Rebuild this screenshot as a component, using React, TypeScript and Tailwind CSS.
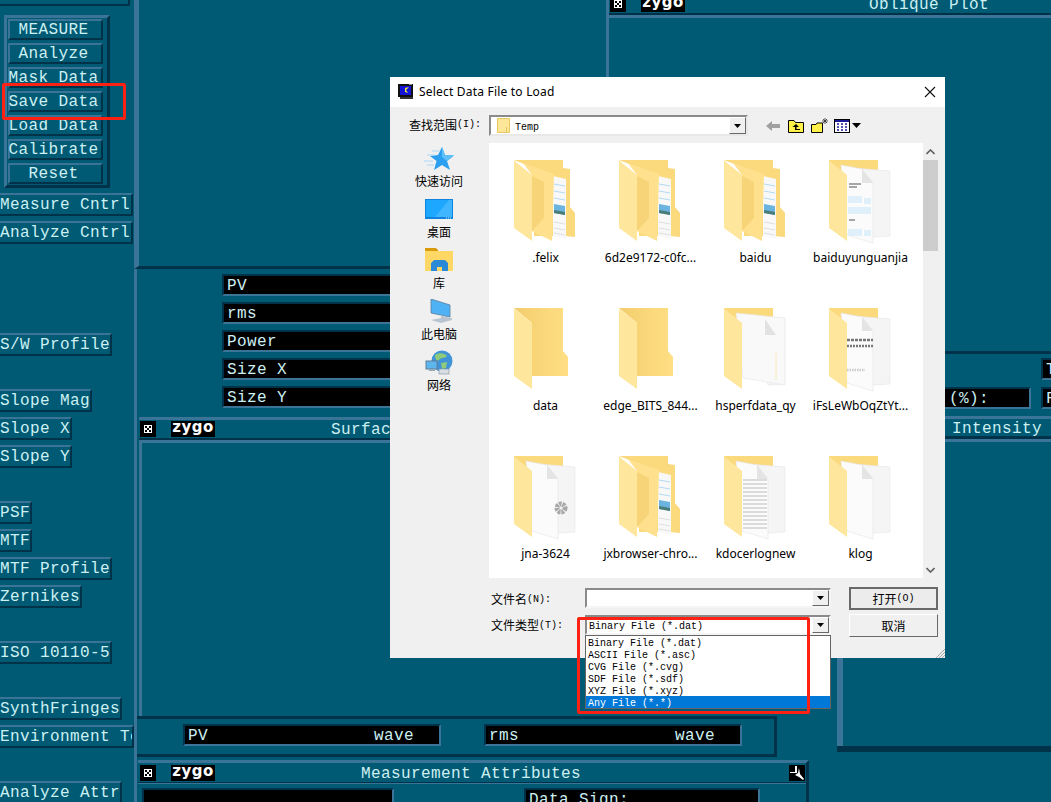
import React from "react"

const MONO = "[font-family:'Liberation_Mono',monospace]"
const UI = "[font-family:'Noto_Sans','Noto_Sans_CJK_SC',sans-serif]"
const CN = "[font-family:'Noto_Sans_CJK_SC',sans-serif]"

const raised = "border-t-[#3a7598] border-l-[#3a7598] border-b-[#003349] border-r-[#003349]"
const sunken = "border-t-[#003349] border-l-[#003349] border-b-[#3a7598] border-r-[#3a7598]"
const xText = "text-[16px] tracking-[0.4px] text-[#cdf0f2] whitespace-nowrap leading-none"

const panelButtons = ["MEASURE", "Analyze", "Mask Data", "Save Data", "Load Data", "Calibrate", "Reset"]

const sideButtons = [
  { label: "Measure Cntrl", w: "w-[133px]", mt: "mt-[5px]" },
  { label: "Analyze Cntrl", w: "w-[133px]", mt: "mt-[5px]" },
  { label: "S/W Profile", w: "w-[112px]", mt: "mt-[89px]" },
  { label: "Slope Mag", w: "w-[92px]", mt: "mt-[33px]" },
  { label: "Slope X", w: "w-[72px]", mt: "mt-[5px]" },
  { label: "Slope Y", w: "w-[72px]", mt: "mt-[5px]" },
  { label: "PSF", w: "w-[32px]", mt: "mt-[33px]" },
  { label: "MTF", w: "w-[32px]", mt: "mt-[5px]" },
  { label: "MTF Profile", w: "w-[112px]", mt: "mt-[5px]" },
  { label: "Zernikes", w: "w-[82px]", mt: "mt-[5px]" },
  { label: "ISO 10110-5", w: "w-[112px]", mt: "mt-[33px]" },
  { label: "SynthFringes", w: "w-[122px]", mt: "mt-[33px]" },
  { label: "Environment Te", w: "w-[134px]", mt: "mt-[5px]" },
  { label: "Analyze Attr", w: "w-[122px]", mt: "mt-[33px]" },
]

const files: { name: string; kind: FolderKind }[] = [
  { name: ".felix", kind: "doc" },
  { name: "6d2e9172-c0fc...", kind: "doc" },
  { name: "baidu", kind: "doc" },
  { name: "baiduyunguanjia", kind: "yun" },
  { name: "data", kind: "plain" },
  { name: "edge_BITS_844...", kind: "plain" },
  { name: "hsperfdata_qy", kind: "sheet" },
  { name: "iFsLeWbOqZtYt...", kind: "print" },
  { name: "jna-3624", kind: "gear" },
  { name: "jxbrowser-chro...", kind: "doc" },
  { name: "kdocerlognew", kind: "lines" },
  { name: "klog", kind: "blank" },
]

type FolderKind = "doc" | "plain" | "yun" | "sheet" | "print" | "gear" | "lines" | "blank"

const Folder = ({ kind }: { kind: FolderKind }) => {
  const defs = (
    <defs>
      <linearGradient id="fback" x1="0" x2="1" y1="0" y2="0">
        <stop offset="0" stopColor="#f3cd6c" />
        <stop offset="1" stopColor="#ffdf85" />
      </linearGradient>
    </defs>
  )
  const flap = <path d="M0 0.5 L18 15 V81 L0 68 Z" fill="#ffe69d" />

  if (kind === "plain") {
    return (
      <svg width="63" height="84" viewBox="0 0 63 84">
        {defs}
        <path d="M0 0 H49 V43 L54 49 V68 H18 V15 Z" fill="url(#fback)" />
        {flap}
      </svg>
    )
  }

  if (kind === "doc") {
    return (
      <svg width="63" height="84" viewBox="0 0 63 84">
        {defs}
        <path d="M0 0 H49 V8 L56 9 V47 L61 53 V77 L50 76 H20 V8 Z" fill="#fbd97d" />
        <path d="M39 16 L52 19 V79 L39 76 Z" fill="#f8f8f8" />
        <path d="M40 24 L51 26 M40 31 L51 33 M40 38 L51 40" stroke="#9fd2f0" strokeWidth="0.8" />
        <path d="M40 62 L51 64 M40 68 L51 70 M40 73 L51 75" stroke="#d8d8d8" strokeWidth="0.8" />
        <path d="M40 44 L51 46 V55 L40 53 Z" fill="#6cb4e0" />
        <path d="M40 50 L51 52 V55 L40 53 Z" fill="#4a7c78" />
        <path d="M9 3 L40 14 L38 81 L18 71 V15 Z" fill="#ffe08d" />
        <path d="M18 16 L30 22 V58 L18 71 Z" fill="#f7d477" />
        {flap}
      </svg>
    )
  }

  return (
    <svg width="63" height="84" viewBox="0 0 63 84">
      {defs}
      <path d="M0 0 H49 V12 H0 Z" fill="#fbd97d" />
      <path d="M25 8 L61 11 V76 L44 77 Z" fill="#f5f5f5" stroke="#e6e6e6" strokeWidth="0.6" />
      {kind === "sheet" && <path d="M12 5 L61 10 V77 L19 70 Z" fill="#f9f9f9" stroke="#e6e6e6" strokeWidth="0.6" />}
      {kind !== "sheet" && <path d="M12 5 L33 9 L44 23 V83 L18 75 Z" fill="#fbfbfb" stroke="#e4e4e4" strokeWidth="0.6" />}
      {kind === "sheet" && <path d="M41 11 L52 27 H41 Z" fill="#e2e2e2" />}
      {kind === "sheet" && <path d="M52 45 V72" stroke="#f6e4b0" strokeWidth="0.8" />}
      {kind !== "sheet" && <path d="M33 9 L44 23 H33 Z" fill="#e4e4e4" />}
      {kind === "yun" && (
        <g fill="#dff0fb">
          <rect x="19" y="36" width="14" height="7" />
          <rect x="35" y="38" width="7" height="6" />
          <rect x="19" y="47" width="23" height="7" />
          <rect x="19" y="69" width="14" height="7" />
          <rect x="35" y="70" width="7" height="6" />
        </g>
      )}
      {kind === "yun" && <path d="M20 24 H32 M20 27 H28 M20 60 H26" stroke="#8a8a8a" strokeWidth="1.5" />}
      {kind === "print" && (
        <g stroke="#777" strokeWidth="2.5">
          <path d="M18 32 H44" strokeDasharray="3 1" />
          <path d="M18 38 H44" strokeDasharray="2 1" />
          <path d="M18 62 H36" stroke="#ccc" strokeDasharray="1.5 1" />
        </g>
      )}
      {kind === "gear" && <circle cx="47" cy="52" r="4" fill="none" stroke="#a8a8a8" strokeWidth="5" strokeDasharray="2.5 0.8" />}
      {kind === "lines" && (
        <path
          d="M19 24 H43 M19 28 H43 M19 32 H43 M19 36 H43 M19 40 H43 M19 44 H43 M19 48 H43 M19 52 H43 M19 56 H43 M19 60 H43 M19 64 H43 M19 68 H43 M19 72 H43"
          stroke="#bbb"
          strokeWidth="1"
        />
      )}
      {flap}
    </svg>
  )
}

const ZygoBox = () => (
  <svg width="16" height="16" viewBox="0 0 16 16" className="shrink-0">
    <rect width="16" height="16" fill="#000" />
    <rect x="4" y="4" width="8" height="8" fill="#fff" />
    <rect x="5" y="5" width="2" height="2" fill="#000" />
    <rect x="9" y="5" width="2" height="2" fill="#000" />
    <rect x="7" y="7" width="2" height="2" fill="#000" />
    <rect x="5" y="9" width="2" height="2" fill="#000" />
    <rect x="9" y="9" width="2" height="2" fill="#000" />
  </svg>
)

const ZygoLogo = () => (
  <span className="ml-[15px] flex h-[16px] w-[44px] shrink-0 items-start justify-center overflow-hidden bg-black text-[15px] font-bold leading-[13px] tracking-[0.5px] text-white [font-family:'DejaVu_Sans',sans-serif]">
    zygo
  </span>
)

const PointerBox = () => (
  <svg width="16" height="16" viewBox="0 0 16 16" className="shrink-0">
    <rect width="16" height="16" fill="#000" />
    <path d="M1 7 H6 V1 H8 V8 H1 Z" fill="#fff" />
    <path d="M6 10 L9 8 L10 3 L11 9 L15 14 L14 15 L10 12 Z" fill="#fff" />
  </svg>
)

const WinHeader = ({ title, titleMl }: { title: string; titleMl: string }) => (
  <div className="shrink-0">
    <div className={`flex h-[18px] items-center pl-[1px] ${MONO}`}>
      <ZygoBox />
      <ZygoLogo />
      <span className={`${titleMl} pt-[2px] ${xText}`}>{title}</span>
    </div>
    <div className="h-[2px] bg-[#003349]" />
    <div className="h-[3px] bg-[#3a7598]" />
  </div>
)

const Field = ({ text, w }: { text: string; w: string }) => (
  <div className={`flex h-[22px] shrink-0 items-center border-2 bg-black pl-[3px] pt-[2px] ${sunken} ${w} ${xText}`}>{text}</div>
)

const WaveField = ({ text }: { text: string }) => (
  <div className={`flex h-[22px] w-[258px] items-center justify-between border-2 bg-black pl-[3px] pr-[25px] pt-[2px] ${sunken} ${xText}`}>
    <span>{text}</span>
    <span>wave</span>
  </div>
)

const Sidebar = () => (
  <div className={`flex w-[134px] flex-col ${MONO}`}>
    <div className="h-[6px] w-[130px] border-b-2 border-r-2 border-[#003349]" />
    <div className={`ml-[4px] mt-[9px] flex w-[106px] flex-col gap-[3px] border-[3px] py-[1px] pl-[1px] pr-[4px] ${raised}`}>
      {panelButtons.map((b) => (
        <div key={b} className={`flex h-[21px] items-center justify-center border-2 pr-[4px] ${raised} ${xText}`}>
          {b}
        </div>
      ))}
    </div>
    {sideButtons.map((b) => (
      <div
        key={b.label}
        className={`flex h-[23px] shrink-0 items-center overflow-hidden border-2 border-l-0 ${raised} ${b.w} ${b.mt} ${xText}`}
      >
        {b.label}
      </div>
    ))}
  </div>
)

const Underlay = () => (
  <>
    {/* top centre window */}
    <div className="absolute left-[134px] top-0 h-[269px] w-[472px] border-b-[3px] border-l-[5px] border-b-[#003349] border-l-[#3a7598]" />

    {/* oblique plot window */}
    <div className="absolute left-[606px] top-[-5px] flex h-[359px] w-[445px] flex-col border-b-[3px] border-l-[3px] border-b-[#003349] border-l-[#3a7598]">
      <WinHeader title="Oblique Plot" titleMl="ml-[184px]" />
    </div>

    {/* results panel */}
    <div className={`absolute left-[134px] top-[269px] flex h-[148px] w-[280px] flex-col gap-[6px] border-l-[3px] border-l-[#3a7598] pl-[85px] pt-[5px] ${MONO}`}>
      {["PV", "rms", "Power", "Size X", "Size Y"].map((t) => (
        <Field key={t} text={t} w="w-[190px]" />
      ))}
    </div>

    {/* strip between the button column and the lower windows */}
    <div className="absolute bottom-0 left-[134px] top-[417px] w-[3px] bg-[#3a7598]" />

    {/* right side readouts */}
    <div className={`absolute left-[930px] top-[387px] ${MONO}`}>
      <div className={`flex h-[22px] w-[101px] items-center border-2 bg-black pl-[17px] pt-[2px] ${sunken} ${xText}`}>(%):</div>
    </div>
    <div className={`absolute left-[1041px] top-[358px] flex w-[30px] flex-col gap-[7px] ${MONO}`}>
      <Field text="T" w="w-[30px]" />
      <Field text="F" w="w-[30px]" />
    </div>

    {/* surface window */}
    <div className="absolute left-[139px] top-[417px] flex h-[300px] w-[637px] flex-col border-t-[3px] border-t-[#3a7598]">
      <WinHeader title="Surface" titleMl="ml-[116px]" />
      <div className="flex-1 border-l-[3px] border-l-[#3a7598]" />
    </div>

    {/* intensity window */}
    <div className={`absolute left-[837px] top-[416px] flex h-[336px] w-[214px] flex-col border-b-[6px] border-b-[#003349] ${MONO}`}>
      <div className="h-[3px] bg-[#3a7598]" />
      <div className="flex h-[17px] items-center justify-end pr-[9px] pt-[2px]">
        <span className={xText}>Intensity</span>
      </div>
      <div className="h-[3px] bg-[#003349]" />
      <div className="h-[3px] bg-[#3a7598]" />
      <div className="flex-1 border-l-[6px] border-l-[#3a7598]" />
    </div>

    {/* wave readouts */}
    <div className={`absolute left-[137px] top-[716px] flex h-[41px] w-[640px] gap-[43px] border-y-[3px] border-r-[3px] border-[#003349] pl-[46px] pt-[5px] ${MONO}`}>
      <WaveField text="PV" />
      <WaveField text="rms" />
    </div>

    {/* measurement attributes */}
    <div className={`absolute left-[138px] top-[760px] flex h-[60px] w-[671px] flex-col border-r-[3px] border-t-[3px] border-r-[#003349] border-t-[#3a7598] ${MONO}`}>
      <div className="flex h-[19px] items-center pl-[2px] pr-[1px]">
        <ZygoBox />
        <ZygoLogo />
        <span className={`ml-[146px] pt-[2px] ${xText}`}>Measurement Attributes</span>
        <span className="ml-auto">
          <PointerBox />
        </span>
      </div>
      <div className="h-[1px] bg-[#003349]" />
      <div className="h-[1px] bg-[#3a7598]" />
      <div className="flex gap-[130px] pl-[4px] pt-[4px]">
        <div className={`h-[30px] w-[252px] border-2 bg-black ${sunken}`} />
        <div className={`h-[30px] w-[236px] border-2 bg-black pl-[3px] pt-[2px] ${sunken} ${xText}`}>Data Sign:</div>
      </div>
    </div>
  </>
)

const TitleIcon = () => (
  <svg width="16" height="16" viewBox="0 0 16 16">
    <rect x="0" y="0" width="15" height="13" fill="#111" />
    <rect x="2" y="2" width="11" height="9" fill="#1414d8" />
    <path d="M7 4 L11 3 L8 6 L10 9 L7 8 Z" fill="#e8e838" />
    <rect x="2" y="13" width="13" height="2" fill="#333" />
    <rect x="11" y="0" width="3" height="1" fill="#999" />
  </svg>
)

const Tri = () => (
  <svg width="7" height="4" viewBox="0 0 7 4">
    <path d="M0 0 H7 L3.5 4 Z" fill="#000" />
  </svg>
)

const DropBtn = () => (
  <div className="flex h-full w-[17px] shrink-0 items-center justify-center border border-b-[#696969] border-l-white border-r-[#696969] border-t-white bg-[#f0f0f0]">
    <Tri />
  </div>
)

const Combo = ({ children, w }: { children?: React.ReactNode; w: string }) => (
  <div className={`flex shrink-0 border-2 border-b-[#f5f5f5] border-l-[#8a8a8a] border-r-[#f5f5f5] border-t-[#8a8a8a] bg-white ${w} h-[20px]`}>
    <div className="flex flex-1 items-center overflow-hidden pl-[1px]">{children}</div>
    <DropBtn />
  </div>
)

const Latin = ({ children }: { children: React.ReactNode }) => <span className={`text-[10px] ${MONO}`}>{children}</span>

const ToolIcons = () => (
  <div className="ml-[18px] flex items-center">
    <svg width="14" height="10" viewBox="0 0 14 10">
      <path d="M0 5 L6 0 V3 H14 V7 H6 V10 Z" fill="#a0a0a0" />
    </svg>
    <svg width="16" height="14" viewBox="0 0 16 14" className="ml-[8px]">
      <path d="M0.5 13.5 V1.5 H6 L7.5 3.5 H15.5 V13.5 Z" fill="#fff04a" stroke="#000" />
      <path d="M8 5 L4.5 8 H7 V11 H12 V10 H8.5 V8 H11 Z" fill="#000" />
    </svg>
    <svg width="17" height="15" viewBox="0 0 17 15" className="ml-[7px]">
      <path d="M0.5 14.5 V6.5 H5 L6 5 H11.5 V14.5 Z" fill="#fff04a" stroke="#000" />
      <path d="M14 0 V6 M11 3 H17 M12 1 L16 5 M16 1 L12 5" stroke="#333" strokeWidth="0.8" />
    </svg>
    <svg width="28" height="14" viewBox="0 0 28 14" className="ml-[6px]">
      <rect x="0.5" y="0.5" width="15" height="13" fill="#fff" stroke="#000" />
      <rect x="1" y="1" width="14" height="2" fill="#1a1a9a" />
      <path d="M3 5 H5 M7 5 H9 M11 5 H13 M3 8 H5 M7 8 H9 M11 8 H13 M3 11 H5 M7 11 H9 M11 11 H13" stroke="#1a1a9a" strokeWidth="1.4" />
      <path d="M18 4 H27 L22.5 9 Z" fill="#000" />
    </svg>
  </div>
)

const navItems = [
  {
    label: "快速访问",
    icon: (
      <svg width="30" height="24" viewBox="0 0 30 24">
        <path d="M18 0 L21 8 L30 8.5 L23 14 L26 23 L18 18 L10 23 L12.5 14 L6 9 L14 8 Z" fill="#2ba0f0" />
        <path d="M18 0 L21 8 L30 8.5 L23 14 L18 10 Z" fill="#5ec0f8" />
        <path d="M8 4 H15 M3 8 H11 M0 14 H9 M3 18 H10" stroke="#a8d8f8" strokeWidth="1" />
      </svg>
    ),
    pad: "pt-[1px]",
  },
  {
    label: "桌面",
    icon: (
      <svg width="28" height="20" viewBox="0 0 28 20">
        <rect width="28" height="20" fill="#0e84e0" />
        <rect x="1" y="1" width="26" height="17" fill="#1ea7ff" />
        <path d="M10 18 L24 1 H27 V18 Z" fill="#3fb6ff" />
        <path d="M21 19 H27" stroke="#d0ecff" strokeWidth="1" strokeDasharray="1 1" />
      </svg>
    ),
    pad: "pt-[2px]",
  },
  {
    label: "库",
    icon: (
      <svg width="28" height="24" viewBox="0 0 28 24">
        <path d="M0 0 H11 L13 2 V5 H0 Z" fill="#d99a0c" />
        <path d="M0 3 H28 V23 H0 Z" fill="#ffd765" />
        <path d="M6 23 V15 L9 12 H20 L23 15 V23 H17 V19 H12 V23 Z" fill="#2b8ad8" />
      </svg>
    ),
    pad: "",
  },
  {
    label: "此电脑",
    icon: (
      <svg width="24" height="25" viewBox="0 0 24 25">
        <path d="M2 0 L21 6 V18 L2 14 Z" fill="#4fb2f4" stroke="#5a7d9c" strokeWidth="0.8" />
        <path d="M12 16 V19 L2 21 L12 24 L23 21 V19 L16 18 Z" fill="#b8c4cf" />
      </svg>
    ),
    pad: "pl-[3px]",
  },
  {
    label: "网络",
    icon: (
      <svg width="28" height="25" viewBox="0 0 28 25">
        <circle cx="17" cy="11" r="10.5" fill="#3f93d6" />
        <path d="M10 5 C14 2 20 3 22 6 C19 9 16 7 14 10 C12 12 10 9 10 5 Z M16 13 L22 12 L21 18 L17 19 Z" fill="#8ecb7a" />
        <rect x="1" y="11" width="11" height="8" fill="#5db6ee" stroke="#5f7c96" />
        <rect x="4" y="19" width="6" height="2" fill="#9aa8b6" />
        <rect x="14" y="19" width="10" height="5" fill="#d8dee4" stroke="#7f8f9e" strokeWidth="0.6" />
      </svg>
    ),
    pad: "",
  },
]

const Dialog = () => (
  <div className={`absolute left-[390px] top-[77px] flex h-[581px] w-[555px] flex-col bg-[#f0f0f0] text-black ${CN}`}>
    <div className="flex h-[30px] shrink-0 items-center bg-white pl-[8px] pr-[9px]">
      <TitleIcon />
      <span className={`ml-[5px] text-[12px] tracking-[0.2px] ${UI}`}>Select Data File to Load</span>
      <svg width="12" height="12" viewBox="0 0 12 12" className="ml-auto">
        <path d="M1 1 L11 11 M11 1 L1 11" stroke="#111" strokeWidth="1.1" />
      </svg>
    </div>

    <div className="flex h-[36px] shrink-0 items-start pt-[8px]">
      <div className="flex h-[21px] w-[99px] items-center pb-[2px] pl-[19px] text-[12px]">
        查找范围<Latin>(I):</Latin>
      </div>
      <div className="flex h-[21px] w-[259px] border-2 border-b-[#e8e8e8] border-l-[#8a8a8a] border-r-[#e8e8e8] border-t-[#8a8a8a] bg-white">
        <div className="flex flex-1 items-center pl-[6px]">
          <svg width="13" height="15" viewBox="0 0 13 15">
            <path d="M0.5 0.5 H12.5 V14.5 H0.5 Z" fill="#ffe79a" stroke="#e8c660" />
            <path d="M9.5 9 V14.5" stroke="#e8c660" />
          </svg>
          <span className={`ml-[5px] pt-[3px] text-[10px] ${MONO}`}>Temp</span>
        </div>
        <DropBtn />
      </div>
      <div className="flex h-[21px] items-center">
        <ToolIcons />
      </div>
    </div>

    <div className="flex h-[435px] shrink-0">
      <div className="w-[99px] shrink-0">
        {navItems.map((n) => (
          <div key={n.label} className="flex h-[51px] flex-col items-center pr-[1px] pt-[3px]">
            <div className={`h-[27px] leading-none ${n.pad}`}>{n.icon}</div>
            <div className="h-[16px] text-[12px] leading-[16px]">{n.label}</div>
          </div>
        ))}
      </div>
      <div className="grid flex-1 grid-cols-[105px_105px_105px_105px] content-start bg-white pl-[4px]">
        {files.map((f) => (
          <div key={f.name} className="flex h-[148px] flex-col items-center pt-[17px]">
            <Folder kind={f.kind} />
            <div className={`mt-[6px] text-[12px] leading-[16px] whitespace-nowrap ${UI}`}>{f.name}</div>
          </div>
        ))}
      </div>
      <div className="mr-[7px] flex w-[15px] shrink-0 flex-col items-center justify-between bg-[#f0f0f0]">
        <div className="flex h-[17px] w-full flex-col items-center justify-center">
          <svg width="9" height="6" viewBox="0 0 9 6">
            <path d="M0.5 5 L4.5 1 L8.5 5" fill="none" stroke="#606060" strokeWidth="1.6" />
          </svg>
        </div>
        <div className="mb-auto h-[91px] w-full bg-[#cdcdcd]" />
        <div className="flex h-[17px] w-full items-center justify-center">
          <svg width="9" height="6" viewBox="0 0 9 6">
            <path d="M0.5 1 L4.5 5 L8.5 1" fill="none" stroke="#606060" strokeWidth="1.6" />
          </svg>
        </div>
      </div>
    </div>

    <div className="relative flex flex-1 pl-[101px] pt-[10px] text-[12px]">
      <div className="flex w-[94px] shrink-0 flex-col gap-[7px]">
        <div className="flex h-[20px] items-center pt-[2px]">
          文件名<Latin>(N):</Latin>
        </div>
        <div className="flex h-[20px] items-center">
          文件类型<Latin>(T):</Latin>
        </div>
      </div>
      <div className="flex w-[264px] shrink-0 flex-col gap-[7px]">
        <Combo w="w-[246px]" />
        <Combo w="w-[246px]">
          <span className={`pl-[1px] pt-[2px] text-[10px] ${MONO}`}>Binary File (*.dat)</span>
        </Combo>
      </div>
      <div className="-mt-[1px] flex w-[89px] shrink-0 flex-col gap-[4px]">
        <div className="flex h-[23px] items-center justify-center border-2 border-[#696969] bg-[#ececec]">
          打开<Latin>(O)</Latin>
        </div>
        <div className="flex h-[23px] items-center justify-center border border-b-[#696969] border-l-white border-r-[#696969] border-t-white bg-[#f0f0f0]">
          取消
        </div>
      </div>

      <svg width="10" height="10" viewBox="0 0 10 10" className="absolute bottom-0 right-0">
        <path d="M10 1 L1 10 M10 4 L4 10 M10 7 L7 10" stroke="#a8a8a8" strokeWidth="1" />
      </svg>

      {/* open dropdown */}
      <div className={`absolute left-[195px] top-[57px] w-[246px] border border-[#646464] bg-white text-[10px] leading-[15px] ${MONO}`}>
        {["Binary File (*.dat)", "ASCII File (*.asc)", "CVG File (*.cvg)", "SDF File (*.sdf)", "XYZ File (*.xyz)"].map((t) => (
          <div key={t} className="h-[12px] pl-[2px]">
            {t}
          </div>
        ))}
        <div className="h-[12px] bg-[#0078d7] pl-[2px] text-white">Any File (*.*)</div>
      </div>
    </div>
  </div>
)

export default function App() {
  return (
    <div className="relative h-[802px] w-[1051px] overflow-hidden bg-[#005a74]">
      <Sidebar />
      <Underlay />
      <Dialog />
      {/* annotation boxes */}
      <div className="pointer-events-none absolute left-[2px] top-[83px] h-[37px] w-[124px] rounded-[2px] border-[3px] border-[#ff2113]" />
      <div className="pointer-events-none absolute left-[577px] top-[617px] h-[97px] w-[233px] rounded-[2px] border-[3px] border-[#ff2113]" />
    </div>
  )
}
